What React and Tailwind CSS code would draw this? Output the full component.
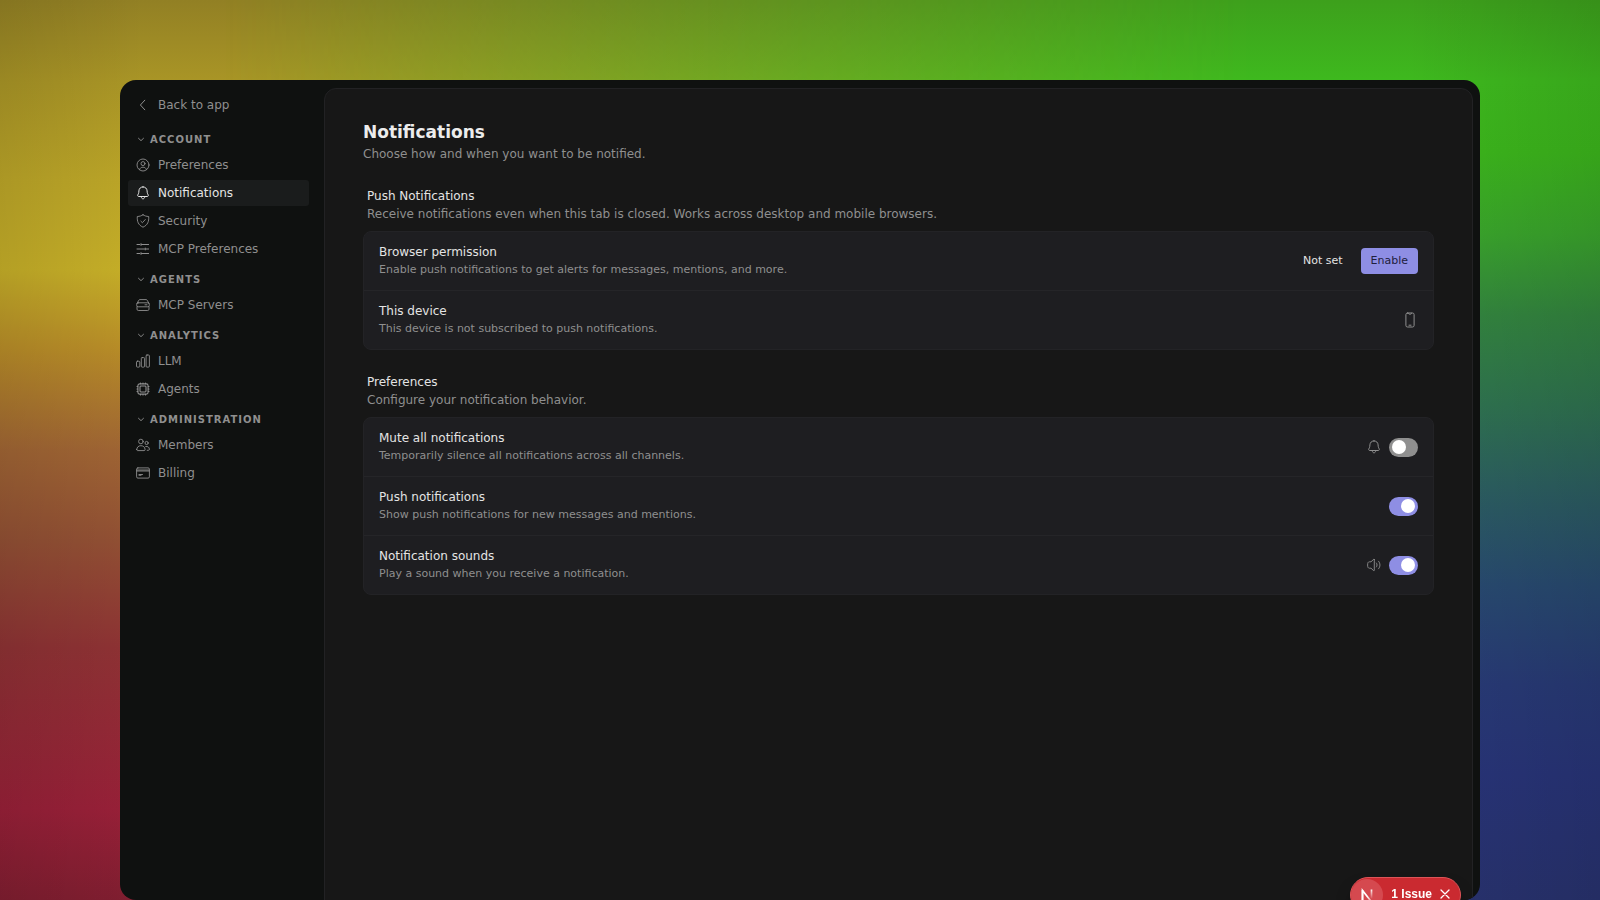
import React from "react";

function Icon({ children, className = "size-3.5", width = 1 }) {
  return (
    <svg
      viewBox="0 0 14 14"
      fill="none"
      stroke="currentColor"
      strokeWidth={width}
      strokeLinecap="round"
      strokeLinejoin="round"
      aria-hidden="true"
      className={`shrink-0 ${className}`}
    >
      {children}
    </svg>
  );
}

const BackIcon = () => (
  <Icon>
    <path d="M8.8 2.2 4.4 7l4.4 4.8" />
  </Icon>
);

const UserCircleIcon = () => (
  <Icon width={0.9}>
    <circle cx="7" cy="7" r="6" />
    <circle cx="7" cy="5.6" r="2" />
    <path d="M3.6 11.6c.3-1.7 1.700-2.400 3.400-2.400s3.100.7 3.400 2.400" />
  </Icon>
);

const BellIcon = () => (
  <Icon>
    <path d="M7 .9C4.600.9 3 2.600 2.900 4.900 2.800 7.200 2.500 7.600 1.800 8.900c-.4.8 0 1.600.9 1.600h8.600c.9 0 1.300-.8.9-1.600-.7-1.300-1-1.700-1.100-4C11 2.600 9.400.9 7 .9Z" />
    <path d="M5.200 10.700c.2 1.500.9 2.100 1.800 2.100s1.600-.6 1.800-2.100" />
  </Icon>
);

const ShieldIcon = () => (
  <Icon width={0.9}>
    <path d="M7 .8c1.700 1.100 3.300 1.600 5.700 1.700.3 4.900-.9 8.500-5.700 10.700C2.200 11 1 7.400 1.300 2.500 3.700 2.400 5.300 1.900 7 .8Z" />
    <path d="m4.900 7.200 1.500 1.500 2.900-3.200" />
  </Icon>
);

const SlidersIcon = () => (
  <Icon>
    <path d="M1 2.500h2.800M5.500 2.500H12.600M5 1.600v1.800M1 7h7.500M10.200 7H12.600M9.300 6.100v1.800M1 11.500h2.800M5.500 11.500h7.100M5 10.600v1.800" />
  </Icon>
);

const ServerIcon = () => (
  <Icon width={0.9}>
    <path d="M1 5.500 2.700 2.400c.3-.6.7-.8 1.300-.8h6c.6 0 1 .2 1.300.8L13 5.500" />
    <rect x=".7" y="4.800" width="12.600" height="4" rx="1.500" />
    <path d="M1 8.800v2.400c0 .8.5 1.300 1.300 1.300h9.400c.8 0 1.300-.5 1.300-1.300V8.800M9 6.800h2" />
  </Icon>
);

const BarsIcon = () => (
  <Icon width={0.9}>
    <rect x=".5" y="7.200" width="3.300" height="5.900" rx=".9" />
    <rect x="5.300" y="3.600" width="3.300" height="9.500" rx=".9" />
    <rect x="10.100" y="1" width="3.300" height="12.100" rx=".9" />
  </Icon>
);

const ChipIcon = () => (
  <Icon width={1.1}>
    <rect x="1.900" y="1.900" width="10.200" height="10.200" rx="1.800" />
    <rect x="4" y="4" width="6" height="6" rx=".9" />
    <path d="M4.500 1.700V1M7 1.700V1M9.500 1.700V1M4.500 13v-.7M7 13v-.7M9.500 13v-.7M1.700 4.500H1M1.700 7H1M1.700 9.500H1M13 4.500h-.7M13 7h-.7M13 9.500h-.7" />
  </Icon>
);

const MembersIcon = () => (
  <Icon width={0.9}>
    <circle cx="4.900" cy="3.500" r="2.300" />
    <path d="M.7 11.500C.9 9 2.600 7.700 4.900 7.700S8.900 9 9.100 11.500c0 .7-.4 1.100-1.100 1.100H1.800c-.7 0-1.100-.4-1.100-1.100Z" />
    <circle cx="10.600" cy="5" r="1.600" />
    <path d="M9.700 8.500c2.200-.4 3.500.7 3.700 2.700 0 .7-.3 1.100-1 1.100h-1.200" />
  </Icon>
);

const CardIcon = () => (
  <Icon width={0.9}>
    <rect x=".6" y="1.900" width="12.800" height="10.200" rx="1.300" />
    <path d="M.8 4h12.400M.8 5h12.400M3 8.500h3.500M3 9.300h2" />
  </Icon>
);

const PhoneIcon = () => (
  <svg
    viewBox="0 0 16 16"
    fill="none"
    stroke="currentColor"
    strokeLinecap="round"
    strokeLinejoin="round"
    aria-hidden="true"
    className="size-4 shrink-0"
  >
    <rect x="3.900" y="1" width="8.200" height="14" rx="1.600" />
    <path d="M6.400 1.200c.1.700.5 1 1 1h1.200c.5 0 .9-.3 1-1M7 13.200h2" />
  </svg>
);

const SpeakerIcon = () => (
  <Icon width={0.9}>
    <path d="M7.300 1.600v10.800c0 .4-.4.500-.7.200L4 10.200H2.300C1.200 10.200.6 9.200.6 7s.6-3.200 1.700-3.200H4l2.600-2.400c.3-.3.7-.2.7.2Z" />
    <path d="M9.400 5c.9 1.100.9 2.900 0 4M11.500 3.200c2 2 2 5.600 0 7.600" />
  </Icon>
);

const groups = [
  {
    title: "Account",
    items: [
      { label: "Preferences", icon: UserCircleIcon },
      { label: "Notifications", icon: BellIcon, active: true },
      { label: "Security", icon: ShieldIcon },
      { label: "MCP Preferences", icon: SlidersIcon },
    ],
  },
  { title: "Agents", items: [{ label: "MCP Servers", icon: ServerIcon }] },
  {
    title: "Analytics",
    items: [
      { label: "LLM", icon: BarsIcon },
      { label: "Agents", icon: ChipIcon },
    ],
  },
  {
    title: "Administration",
    items: [
      { label: "Members", icon: MembersIcon },
      { label: "Billing", icon: CardIcon },
    ],
  },
];

function NavLink({ icon: Glyph, label, active }) {
  return (
    <a
      href="#"
      aria-current={active ? "page" : undefined}
      className={`flex h-[26px] items-center gap-2 rounded-[3px] px-2 text-xs ${
        active ? "bg-[#1a1c1c] text-[#e4e4e4]" : "text-[#8f8f8f]"
      }`}
    >
      <Glyph />
      {label}
    </a>
  );
}

function Sidebar() {
  return (
    <nav aria-label="Settings" className="w-[204px] shrink-0 pt-3 pr-[15px] pl-2">
      <div className="mb-2.5">
        <NavLink icon={BackIcon} label="Back to app" />
      </div>
      {groups.map((group) => (
        <section key={group.title}>
          <button
            type="button"
            className="mt-1.5 mb-0.5 flex h-[22px] items-center gap-1 pl-2 text-[10px] font-bold tracking-widest text-[#8f8f8f] uppercase"
          >
            <Icon className="size-2.5" width={1.3}>
              <path d="m3.500 6 3.500 3.300L10.500 6" />
            </Icon>
            {group.title}
          </button>
          <ul className="flex flex-col gap-0.5">
            {group.items.map((item) => (
              <li key={item.label}>
                <NavLink {...item} />
              </li>
            ))}
          </ul>
        </section>
      ))}
    </nav>
  );
}

function Section({ title, description, children }) {
  return (
    <section>
      <div className="px-1 text-xs leading-[18px]">
        <h2 className="text-[#e4e4e4]">{title}</h2>
        <p className="text-[#8f8f8f]">{description}</p>
      </div>
      <div className="mt-2 divide-y divide-[#252528] rounded-lg border border-[#232326] bg-[#1e1e21]">
        {children}
      </div>
    </section>
  );
}

function Row({ id, title, description, children }) {
  const Title = id ? "label" : "h3";
  return (
    <div className="flex items-center justify-between px-[15px] py-[11px]">
      <div>
        <Title htmlFor={id} className="block text-xs leading-[18px] text-[#e4e4e4]">
          {title}
        </Title>
        <p className="text-[11px] leading-[18px] text-[#8f8f8f]">{description}</p>
      </div>
      <div className="flex items-center gap-2 text-[#8f8f8f]">{children}</div>
    </div>
  );
}

function Toggle({ id, defaultChecked }) {
  return (
    <input
      id={id}
      type="checkbox"
      role="switch"
      defaultChecked={defaultChecked}
      className="flex h-[19px] w-[29px] appearance-none items-center rounded-full bg-[#8f8f8f] px-[3px] before:size-3.5 before:rounded-full before:bg-white checked:justify-end checked:bg-[#8e8ee4]"
    />
  );
}

function IssueBadge() {
  return (
    <div className="fixed right-[139px] -bottom-[13px] flex h-9 items-center rounded-full border border-[#dc5458] bg-[#ca2a30] pr-2 font-['Liberation_Sans',sans-serif] text-xs font-bold text-white shadow-lg shadow-black/50">
      <button
        type="button"
        aria-label="Open developer tools"
        className="flex size-8 items-center justify-center rounded-full bg-[#d5494f]"
      >
        <svg viewBox="0 0 32 32" fill="none" className="size-8" aria-hidden="true">
          <defs>
            <linearGradient id="n-diagonal" x1="17" y1="17" x2="23" y2="26" gradientUnits="userSpaceOnUse">
              <stop stopColor="#fff" />
              <stop offset="1" stopColor="#fff" stopOpacity="0" />
            </linearGradient>
            <linearGradient id="n-stem" x1="21" y1="10" x2="21" y2="20" gradientUnits="userSpaceOnUse">
              <stop stopColor="#fff" />
              <stop offset="1" stopColor="#fff" stopOpacity="0" />
            </linearGradient>
          </defs>
          <path d="M11.500 22V11.500L23 26" stroke="url(#n-diagonal)" strokeWidth="1.700" />
          <path d="M11.500 22V11" stroke="#fff" strokeWidth="1.700" />
          <path d="M20.500 10.500v9" stroke="url(#n-stem)" strokeWidth="1.700" />
        </svg>
      </button>
      <button type="button" className="pb-0.5 pl-2 leading-none">
        1 Issue
      </button>
      <button type="button" aria-label="Dismiss issue" className="pb-0.5 pl-1.5">
        <Icon className="size-3.5" width={1.3}>
          <path d="m3 3 8 8M11 3l-8 8" />
        </Icon>
      </button>
    </div>
  );
}

export default function App() {
  return (
    <div className="relative isolate flex h-screen flex-col overflow-hidden px-[7.5%] pt-20 font-['DejaVu_Sans',sans-serif]">
      <div className="absolute inset-0 -z-10 bg-[linear-gradient(180deg,#928024_0%,#a99526_9%,#bca628_20%,#c6af28_30%,#b88c28_39%,#a06534_50%,#925034_60%,#8e3234_72%,#982038_90%,#801e30_100%)]" />
      <div className="absolute inset-0 -z-10 bg-[linear-gradient(180deg,#3da01c_0%,#3eb91e_9%,#3cb61c_17%,#3aa52c_26%,#33853f_35%,#2f7350_45%,#2c5f60_54%,#284a70_65%,#283a76_76%,#283478_86%,#28326e_100%)] mask-[linear-gradient(90deg,transparent_14%,rgba(0,0,0,0.6)_50%,black_78%)]" />
      <div className="absolute inset-0 -z-10 bg-[linear-gradient(90deg,rgba(0,0,0,0.09),transparent_9%,transparent_88%,rgba(0,0,0,0.1))]" />

      <div className="flex min-h-0 flex-1 overflow-hidden rounded-2xl bg-[#0f1110]">
        <Sidebar />
        <main className="mt-2 mr-[7px] -mb-4 flex-1 rounded-xl border border-[#222224] bg-[#171717] px-[38px] pt-[31px]">
          <header className="mb-[23px]">
            <h1 className="text-[17px] leading-6 font-bold text-[#ececec]">Notifications</h1>
            <p className="text-xs leading-5 text-[#8f8f8f]">
              Choose how and when you want to be notified.
            </p>
          </header>
          <div className="flex flex-col gap-[23px]">
            <Section
              title="Push Notifications"
              description="Receive notifications even when this tab is closed. Works across desktop and mobile browsers."
            >
              <Row
                title="Browser permission"
                description="Enable push notifications to get alerts for messages, mentions, and more."
              >
                <span className="px-2.5 text-[11px] text-[#e4e4e4]">Not set</span>
                <button
                  type="button"
                  className="h-[26px] rounded bg-[#8e8ee4] px-2.5 text-[11px] text-[#20203c]"
                >
                  Enable
                </button>
              </Row>
              <Row
                title="This device"
                description="This device is not subscribed to push notifications."
              >
                <PhoneIcon />
              </Row>
            </Section>
            <Section title="Preferences" description="Configure your notification behavior.">
              <Row
                id="mute-all"
                title="Mute all notifications"
                description="Temporarily silence all notifications across all channels."
              >
                <BellIcon />
                <Toggle id="mute-all" />
              </Row>
              <Row
                id="push"
                title="Push notifications"
                description="Show push notifications for new messages and mentions."
              >
                <Toggle id="push" defaultChecked />
              </Row>
              <Row
                id="sounds"
                title="Notification sounds"
                description="Play a sound when you receive a notification."
              >
                <SpeakerIcon />
                <Toggle id="sounds" defaultChecked />
              </Row>
            </Section>
          </div>
        </main>
      </div>
      <IssueBadge />
    </div>
  );
}
